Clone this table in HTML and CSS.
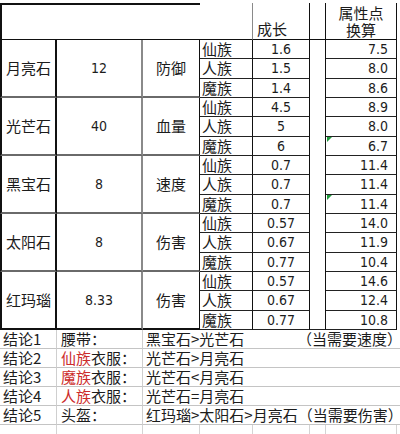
FILE: index.html
```html
<!DOCTYPE html>
<html lang="zh-CN">
<head>
<meta charset="utf-8">
<title>宝石属性对比</title>
<link rel="stylesheet" href="styles.css">
</head>
<body>
<table class="sheet">
  <colgroup>
    <col class="w57"><col class="w86"><col class="w57"><col class="w53"><col class="w57"><col class="w16"><col class="w71"><col class="w3">
  </colgroup>
  <tr class="head">
    <th colspan="3" class="h-left"></th>
    <th class="h-blank"></th>
    <th class="h-growth">成长</th>
    <th class="h-gap"></th>
    <th class="h-score"><span class="hl">属性点</span><span class="hl">换算</span></th>
    <th class="edge"></th>
  </tr>

  <tr class="row">
    <td rowspan="3" class="gem">月亮石</td><td rowspan="3" class="val num">12</td><td rowspan="3" class="attr">防御</td>
    <td class="race">仙族</td><td class="grow num">1.6</td><td class="gap"></td><td class="score num">7.5</td><td class="edge"></td>
  </tr>
  <tr class="row"><td class="race">人族</td><td class="grow num">1.5</td><td class="gap"></td><td class="score num">8.0</td><td class="edge"></td></tr>
  <tr class="row"><td class="race">魔族</td><td class="grow num">1.4</td><td class="gap"></td><td class="score num">8.6</td><td class="edge"></td></tr>

  <tr class="row">
    <td rowspan="3" class="gem">光芒石</td><td rowspan="3" class="val num">40</td><td rowspan="3" class="attr">血量</td>
    <td class="race">仙族</td><td class="grow num">4.5</td><td class="gap"></td><td class="score num">8.9</td><td class="edge"></td>
  </tr>
  <tr class="row"><td class="race">人族</td><td class="grow num">5</td><td class="gap"></td><td class="score num">8.0</td><td class="edge"></td></tr>
  <tr class="row"><td class="race">魔族</td><td class="grow num">6</td><td class="gap"></td><td class="score num flag">6.7</td><td class="edge"></td></tr>

  <tr class="row">
    <td rowspan="3" class="gem">黑宝石</td><td rowspan="3" class="val num">8</td><td rowspan="3" class="attr">速度</td>
    <td class="race">仙族</td><td class="grow num">0.7</td><td class="gap"></td><td class="score num">11.4</td><td class="edge"></td>
  </tr>
  <tr class="row"><td class="race">人族</td><td class="grow num">0.7</td><td class="gap"></td><td class="score num">11.4</td><td class="edge"></td></tr>
  <tr class="row"><td class="race">魔族</td><td class="grow num">0.7</td><td class="gap"></td><td class="score num flag">11.4</td><td class="edge"></td></tr>

  <tr class="row">
    <td rowspan="3" class="gem">太阳石</td><td rowspan="3" class="val num">8</td><td rowspan="3" class="attr">伤害</td>
    <td class="race">仙族</td><td class="grow num">0.57</td><td class="gap"></td><td class="score num">14.0</td><td class="edge"></td>
  </tr>
  <tr class="row"><td class="race">人族</td><td class="grow num">0.67</td><td class="gap"></td><td class="score num">11.9</td><td class="edge"></td></tr>
  <tr class="row"><td class="race">魔族</td><td class="grow num">0.77</td><td class="gap"></td><td class="score num">10.4</td><td class="edge"></td></tr>

  <tr class="row">
    <td rowspan="3" class="gem end">红玛瑙</td><td rowspan="3" class="val num end">8.33</td><td rowspan="3" class="attr end">伤害</td>
    <td class="race">仙族</td><td class="grow num">0.57</td><td class="gap"></td><td class="score num">14.6</td><td class="edge"></td>
  </tr>
  <tr class="row"><td class="race">人族</td><td class="grow num">0.67</td><td class="gap"></td><td class="score num">12.4</td><td class="edge"></td></tr>
  <tr class="row last"><td class="race">魔族</td><td class="grow num">0.77</td><td class="gap"></td><td class="score num">10.8</td><td class="edge"></td></tr>

  <tr class="concl">
    <td class="c-label">结论1</td><td class="c-key">腰带：</td>
    <td colspan="6" class="c-text"><div class="c-line"><span class="lhs">黑宝石&gt;光芒石</span><span class="note">（当需要速度）</span></div></td>
  </tr>
  <tr class="concl">
    <td class="c-label">结论2</td><td class="c-key"><span class="red">仙族</span>衣服：</td>
    <td colspan="6" class="c-text"><div class="c-line"><span class="lhs">光芒石&gt;月亮石</span></div></td>
  </tr>
  <tr class="concl">
    <td class="c-label">结论3</td><td class="c-key"><span class="red">魔族</span>衣服：</td>
    <td colspan="6" class="c-text"><div class="c-line"><span class="lhs">光芒石&lt;月亮石</span></div></td>
  </tr>
  <tr class="concl">
    <td class="c-label">结论4</td><td class="c-key"><span class="red">人族</span>衣服：</td>
    <td colspan="6" class="c-text"><div class="c-line"><span class="lhs">光芒石=月亮石</span></div></td>
  </tr>
  <tr class="concl">
    <td class="c-label">结论5</td><td class="c-key">头盔：</td>
    <td colspan="6" class="c-text"><div class="c-line"><span class="lhs">红玛瑙&gt;太阳石&gt;月亮石</span><span class="note">（当需要伤害）</span></div></td>
  </tr>
  <tr class="blank">
    <td class="b"></td><td class="b"></td><td class="b"></td><td class="b"></td><td class="b"></td><td class="b"></td><td class="b"></td><td></td>
  </tr>
</table>
</body>
</html>
```

FILE: styles.css
```css
html {
  overflow: hidden;
}

html, body {
  margin: 0;
  padding: 0;
  background: #ffffff;
}

body {
  font-family: "Noto Sans CJK SC", "Noto Sans", sans-serif;
  color: #1c1c1c;
}

.sheet {
  border-collapse: separate;
  border-spacing: 0;
  table-layout: fixed;
  width: 400px;
  margin-top: 3px;
  font-size: 15px;
  line-height: 18px;
}

.w57 { width: 57px; }
.w86 { width: 86px; }
.w53 { width: 53px; }
.w16 { width: 16px; }
.w71 { width: 71px; }
.w3 { width: 3px; }

.sheet th,
.sheet td {
  padding: 0;
  font-weight: normal;
  white-space: nowrap;
}

.num {
  font-family: "DejaVu Sans", "Noto Sans", sans-serif;
  font-stretch: condensed;
  font-size: 14px;
}

/* header */
.head { height: 37px; }

.h-left {
  border-top: 2px solid #111;
  border-left: 2px solid #111;
  border-bottom: 1px solid #111;
}

.h-blank {
  border-bottom: 1px solid #111;
  border-right: 1px solid #8a8a8a;
}

.h-growth {
  vertical-align: bottom;
  text-align: left;
  padding-left: 4px !important;
  padding-bottom: 2px !important;
  line-height: 17px;
  border-right: 1px solid #111;
  border-bottom: 1px solid #111;
}

.h-gap {
  border-right: 1px solid #111;
  border-bottom: 1px solid #111;
}

.h-score {
  vertical-align: bottom;
  text-align: center;
  padding-bottom: 1px !important;
  border-right: 1px solid #111;
  border-bottom: 1px solid #111;
}

.hl {
  display: block;
  line-height: 17px;
}

/* body rows */
.row { height: 19.33px; }

.gem {
  text-align: center;
  border-left: 2px solid #111;
  border-right: 2px solid #111;
  border-bottom: 2px solid #6a6a6a;
}

.val {
  text-align: center;
  border-right: 2px solid #8a8a8a;
  border-bottom: 2px solid #6a6a6a;
}

.attr {
  text-align: center;
  border-right: 1px solid #111;
  border-bottom: 2px solid #6a6a6a;
}

.end { border-bottom: 2px solid #111; }

.race {
  text-align: left;
  padding-left: 2px !important;
  border-right: 1px solid #111;
  border-bottom: 1px solid #222;
}

.grow {
  text-align: center;
  border-right: 1px solid #111;
  border-bottom: 1px solid #222;
}

.gap { border-right: 1px solid #111; }

.last .gap { border-bottom: 1px solid #222; }

.score {
  text-align: right;
  padding-right: 8px !important;
  border-right: 1px solid #111;
  border-bottom: 1px solid #222;
}

.flag { position: relative; }

.flag::before {
  content: "";
  position: absolute;
  left: 1px;
  top: 0;
  border-top: 5px solid #1f9a3c;
  border-right: 5px solid transparent;
}

/* conclusions */
.concl { height: 19px; }

.c-label {
  padding-left: 3px !important;
  border-right: 1px solid #cfcfcf;
  border-bottom: 1px solid #c4c4c4;
}

.c-key {
  padding-left: 4px !important;
  border-right: 1px solid #cfcfcf;
  border-bottom: 1px solid #c4c4c4;
}

.c-text {
  padding-left: 3px !important;
  border-bottom: 1px solid #c4c4c4;
}

.c-line {
  display: flex;
  white-space: nowrap;
}

.lhs {
  flex: 0 0 auto;
  min-width: 151px;
}

.note { flex: 0 0 auto; }

.red { color: #cc2b2b; }

.blank { height: 19px; }

.b { border-right: 1px solid #d4d4d4; }
```
